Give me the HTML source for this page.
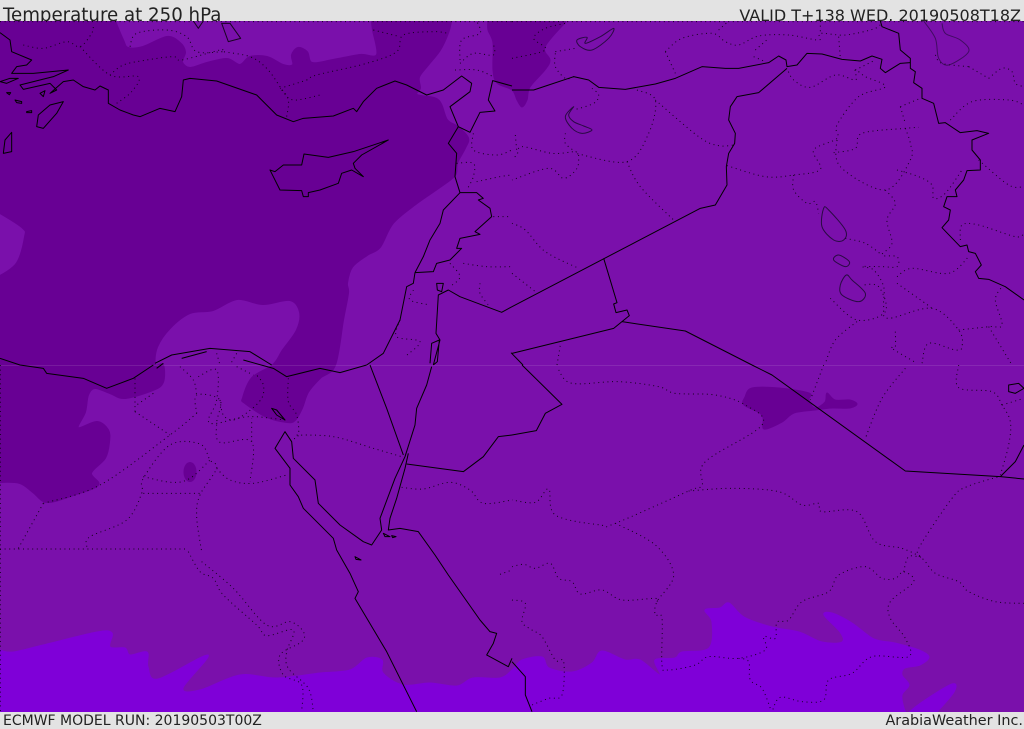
<!DOCTYPE html>
<html><head><meta charset="utf-8"><title>Temperature at 250 hPa</title>
<style>
html,body{margin:0;padding:0;background:#e3e3e3}
#w{position:relative;width:1024px;height:729px;overflow:hidden;background:#e3e3e3;font-family:"DejaVu Sans",sans-serif;color:#222}
svg{position:absolute;left:0;top:21px}
.t{position:absolute;white-space:nowrap;line-height:20px}
.hd{position:absolute;left:0;top:0;width:1024px;height:21px;overflow:hidden}
.s path{fill:none;stroke:#000;stroke-width:1;vector-effect:non-scaling-stroke;stroke-linejoin:round}
.d path{fill:none;stroke:#000;stroke-width:1;stroke-dasharray:1 3.6;vector-effect:non-scaling-stroke;opacity:.85}
.l path{fill:none;stroke:#2a0a44;stroke-width:1;vector-effect:non-scaling-stroke}
</style></head><body><div id="w">
<svg width="1024" height="691" viewBox="0 21 1024 691">
<rect x="0" y="21" width="1024" height="691" fill="#7a10ab"/>
<g stroke-linejoin="round">
<path class="sm" fill="#680094" stroke="#680094" stroke-width="2" d="M0 21L115 21L123 40L128 48L143 47L167 37L180 43L185 52L182 62L190 68L207 63L227 59L240 65L250 57L267 57L283 65L293 65L292 55L298 48L307 52L312 63L333 60L360 55L377 55L373 30L372 21L451 21L448 33L440 50L428 65L419 77L420 88L417 95L438 100L447 120L458 127L468 138L465 148L457 163L455 175L440 187L417 203L393 223L380 247L367 255L352 267L347 283L348 293L343 320L335 365L320 378L308 392L302 408L295 420L287 422L267 417L245 403L243 398L252 378L273 365L283 350L297 330L300 312L290 300L263 304L237 299L213 310L190 313L170 328L157 347L155 365L163 365L163 382L153 390L125 398L110 393L95 388L88 395L85 412L78 428L97 422L108 430L109 442L105 458L91 473L98 485L73 495L47 502L33 492L20 483L0 482L0 276L17 263L25 237L23 228L0 213Z"/>
<path class="sm" fill="#680094" stroke="#680094" d="M488 21L488 30L493 43L493 70L497 83L512 90L517 100L522 107L527 100L530 87L545 70L550 60L545 47L565 23L566 21Z"/>
<path class="sm" fill="#680094" stroke="#680094" d="M752 388L779 388L809 393L809 400L815 408L825 402L827 393L835 400L850 400L857 404L850 408L832 408L815 410L794 413L782 422L764 429L762 415L744 405L745 397Z"/>
<ellipse cx="190" cy="472" rx="6.5" ry="10" fill="#680094"/>
<path class="sm" fill="#7f00d8" stroke="#7f00d8" d="M0 650L13 652L43 645L97 632L112 633L110 647L125 648L130 655L147 652L148 667L158 679L208 655L183 688L200 690L240 675L277 678L320 673L350 670L367 658L382 660L383 673L403 685L430 683L457 686L473 678L500 678L512 670L522 660L542 657L549 668L572 672L592 663L602 651L625 660L640 660L660 675L655 660L675 658L682 652L709 648L712 622L705 610L720 608L729 603L744 617L772 627L799 632L822 642L842 642L840 632L824 615L832 613L852 623L874 639L895 643L919 650L929 657L920 665L905 668L902 675L909 685L902 695L904 708L907 714L922 702L952 684L954 692L935 714L0 714Z"/>
</g>
<rect x="0" y="365" width="1024" height="1" fill="#fff" opacity=".1"/>

<g transform="scale(.33333)">
 <g class="d">
 <path d="M70 135L130 145L200 125L240 140L275 100L280 75M240 140L330 225L415 230L395 275L350 310M330 225L370 195L440 180L520 170L545 180L660 150L670 155L750 170L800 205L840 260L865 300L860 350M390 140L410 100L500 90L560 110L590 155L670 155M840 265L920 240L950 225L1100 190L1190 155L1210 105L1300 95L1345 100M845 270L880 300L960 285M1120 90L1200 110M1380 180L1385 120L1440 100L1430 63M1380 190L1420 160L1480 165L1480 130M1365 210L1430 210L1480 230M1420 400L1420 450L1490 465L1536 450M1370 490L1420 490L1420 530L1400 570M1430 545L1500 530L1536 525M1480 650L1530 650M1390 790L1460 800L1536 800M1440 850L1440 880L1465 915M1350 790L1380 830L1350 860M1240 870L1230 900L1290 915M1200 960L1190 1010L1260 1025L1215 1070M650 1060L660 1095M710 1060L690 1095"/>
 <path d="M0 65L1536 65"/>
 </g>
 <g class="s">
 <path d="M0 98L30 120L35 155L95 180L80 195L50 200L35 220L100 220L205 210L160 230L60 255L70 268L150 250L170 270L150 280L190 245L220 240L250 260L285 270L300 258L325 270L325 310L360 330L400 345L420 350L480 325L525 335L545 290L550 240L570 235L650 243L770 285L830 345L880 365L910 355L1000 348L1060 325L1070 335L1090 305L1130 265L1185 243L1220 255L1280 285L1330 270L1385 228L1415 250L1410 275L1350 320L1375 380L1410 397L1440 337L1485 333L1465 300L1478 242L1536 258"/>
 <path d="M1375 380L1345 430L1370 460L1365 530L1380 578L1430 578L1450 595L1435 600L1470 625L1475 650L1425 695L1440 703L1380 715L1370 745L1385 745L1350 780L1310 790L1300 815L1245 818L1240 850L1220 860L1200 960L1150 1060L1100 1095M1380 578L1330 630L1320 670L1290 720L1270 770L1245 818"/>
 <path d="M1536 920L1505 937L1420 905L1380 890L1345 870L1315 885L1308 1000L1320 1020L1300 1095M1290 1090L1295 1030L1318 1020L1312 1085L1300 1095"/>
 <path d="M465 1090L515 1065L630 1045L750 1055L815 1095M545 1075L620 1055"/>
 <path d="M810 510L825 515L850 495L905 495L912 462L985 472L1060 455L1165 420L1085 465L1060 490L1065 505L1090 530L1055 510L1025 520L1015 550L960 570L925 578L925 590L910 590L905 572L840 570L820 530Z"/>
 <path d="M190 305L150 315L115 345L110 380L130 385L170 340Z"/>
 <path d="M10 460L15 420L35 397L35 455ZM0 245L30 235L55 235L20 250ZM80 335L95 332L95 338L80 338ZM45 300L65 305L65 310L50 308ZM120 280L135 272L130 290ZM20 278L32 278L28 284Z"/>
 <path d="M1310 850L1330 850L1325 875L1312 870Z"/>
 <path d="M580 63L595 85L610 63M665 70L690 70L722 115L685 125Z" opacity=".8"/>
 </g>
</g>

<g transform="translate(512,0) scale(.33333)">
 <g class="d">
 <path d="M130 160L130 200L160 235L185 230M130 155L190 145M0 175L100 150L65 115L100 85L160 70M460 155L490 220M460 155L510 115L600 100L640 125L680 135L740 108L830 105L920 120L925 100L1000 105L1090 85L1110 63M620 90L650 63M730 150L770 115M725 170L760 185M925 63L925 100M980 110L985 175M240 265L260 285L245 310L185 330M375 270L430 300L410 400L345 485L200 462L190 455L120 460L30 440L15 465L0 475M430 300L560 410L620 437L665 435M345 485L385 560L490 665M200 465L195 505L155 535L110 505L0 540M160 400L160 430L190 455M10 405L15 460M0 670L40 690L100 755L200 805M0 820L70 875"/>
 <path d="M645 497L760 530L845 525L925 508L905 450L975 415L975 375L1040 290L1120 260L1060 230L1030 210L1030 240L970 225L895 262L845 240L825 205M1030 210L1090 180M965 458L1030 445L1050 400L1180 385L1220 382M1180 385L1195 430L1195 480L1120 570L985 500L975 415M845 525L845 570L885 610L910 605L920 640M1165 320L1225 295M1165 320L1180 370M1155 510L1220 530L1260 555L1265 595L1300 580L1350 510M1120 570L1150 610L1125 660L1140 730L1110 765L1155 770L1155 800L1110 800L1050 800L1085 810L1115 860L1115 920L1130 955L1260 925L1340 990L1350 1040L1330 1050L1250 1030L1230 1090M1000 715L1060 730L1110 765M1155 830L1200 805L1310 820L1370 770M1155 850L1240 910L1260 925M955 895L1035 960L1120 935L1100 860L1050 855M1035 965L970 1020L940 1090M1340 990L1430 980L1470 975L1450 900L1470 860M1430 980L1500 1095M1150 995L1150 1040L1140 1045L1215 1090M1315 360L1380 305L1490 300L1536 315M1345 720L1350 675L1400 675L1510 710L1536 700M1400 480L1490 555L1536 560M1430 235L1470 205L1500 215L1510 250L1536 260M1370 200L1430 235M1270 165L1290 190L1370 200M135 1095L145 1035"/>
 <path d="M0 65L1536 65"/>
 </g>
 <g class="s">
 <path d="M0 270L65 270L110 255L185 230L230 240L260 262L340 268L430 252L490 235L570 200L640 205L680 205L770 188L800 168L822 180L825 200L855 195L885 160L930 162L990 178L1045 183L1080 168L1110 178L1105 205L1120 218L1165 190L1195 188"/>
 <path d="M1105 63L1110 80L1160 100L1165 150L1195 175L1195 205L1210 215L1205 248L1230 265L1230 295L1265 310L1280 370L1300 368L1345 398L1395 392L1430 400L1380 420L1380 450L1405 480L1405 510L1365 512L1355 540L1330 570L1335 590L1305 590L1295 620L1315 630L1310 660L1290 683L1345 740L1365 735L1370 755L1390 760L1408 795L1390 815L1400 835L1430 838L1480 860L1536 900"/>
 <path d="M825 205L740 278L675 290L655 320L650 360L670 400L668 430L650 460L643 500L645 555L610 615L565 625L0 920"/>
 <path d="M275 775L315 908L305 912L312 938L345 930L352 947L305 985L0 1060M330 965L520 993L720 1095"/>
 <path d="M-3 1058L33 1095"/>
 </g>
 <g class="l">
 <path d="M185 320L160 350L180 385L210 400L240 390L215 378L185 365L170 345Z"/>
 <path d="M935 625L930 680L965 720L995 720L1000 690L950 630Z"/>
 <path d="M980 765L965 780L1000 800L1012 785Z"/>
 <path d="M1003 825L985 855L990 885L1040 905L1060 880L1020 840Z"/>
 <path d="M195 120L225 112L220 130L265 110L305 85L290 115L240 150L205 140Z"/>
 <path d="M1235 63L1270 115L1280 175L1310 195L1370 155L1345 120L1300 100L1290 70" opacity=".7"/>
 </g>
</g>

<g transform="translate(0,365) scale(.33333)">
 <g class="d">
 <path d="M0 552L560 552M565 560L600 620L640 640L670 690L770 780L800 812L880 795L860 860L865 910L925 970L940 1040M605 590L700 670L800 780L870 770L910 800L905 830L840 870L850 930L905 960L905 1040M55 550L130 415M260 545L270 515L380 465L425 385L430 340L510 240L600 237L630 285L650 310L600 390L590 455L605 560M430 335L515 352L570 340L630 285M430 385L600 385M130 415L300 360L510 210L590 145M405 140L510 210M405 140L405 40M460 85L410 120M590 145L590 90L660 105L650 175L660 232L755 230L750 350M595 35L650 15L650 105L625 165L650 175L745 155L855 165M660 105L670 150L700 165L745 140L785 100L790 60L770 30M755 230L755 160M650 310L690 345L760 355L860 330M890 210L1000 215L1120 250L1205 275M1205 367L1270 372L1350 352L1410 375L1450 415L1536 405M540 5L580 45L590 90M710 5L760 30M865 40L865 110L890 150L895 210L870 225M1500 628L1536 615"/>
 <path d="M1 0L1 1040"/>
 </g>
 <g class="s">
 <path d="M0 -20L60 0L130 10L140 25L250 40L320 70L400 40L460 0M730 -15L820 10L860 35L900 25L960 10L1020 23L1100 0M490 -5L470 10M860 35L940 15"/>
 <path d="M1110 0L1160 130L1210 270"/>
 <path d="M1295 5L1280 60L1250 130L1245 180L1215 275L1185 340L1140 460L1145 495L1115 540L1090 530L1020 480L955 415L945 345L880 280L875 230L855 200L825 250L870 310L870 360L895 395L910 430L1000 520L1010 555L1050 625L1075 680L1065 700L1160 860L1250 1040"/>
 <path d="M1225 265L1215 310L1190 400L1170 460L1165 495L1200 490L1255 500L1305 570L1345 630L1440 765L1470 800L1490 805L1480 835L1460 870L1525 905L1536 880"/>
 <path d="M1536 210L1495 215L1450 275L1390 320L1220 297"/>
 <path d="M815 130L830 135L855 165L830 150ZM1150 505L1170 515L1155 515ZM1175 512L1188 515L1178 518ZM1065 575L1083 585L1068 583Z"/>
 </g>
</g>

<g transform="translate(512,365) scale(.33333)">
 <g class="d">
 <path d="M140 15L180 55L320 50L440 65L490 85L610 90L700 120L750 180L580 290L570 360L530 378L310 475L265 480L130 450L110 372L70 412L0 405M530 378L660 370L800 380L870 420L920 415L930 440L1035 440L1090 530L1170 550L1230 580L1270 625L1340 650L1370 680L1450 710L1536 715M310 475L430 540L485 630L435 710L430 750L450 760L450 900L470 915L550 900L590 875L680 880L760 855L755 815L790 820L795 772L830 765L870 710L950 680L980 630L1060 605L1110 640L1150 640L1175 620L1205 650L1135 710L1135 760L1180 820L1190 875L1080 875L1020 925L950 945L935 1005L870 1010L805 997L780 1040M680 880L710 890L715 945L750 970L775 1030M1175 620L1190 575L1230 575L1220 550L1320 400L1365 365L1460 335M0 705L40 715L30 770L60 795L90 815L130 885L155 890L150 990L110 1000L60 1020M0 605L35 598L70 610L115 595L140 640L180 650L205 687L270 675L330 705L430 700L435 710M935 0L895 105M1180 10L1110 100L1060 220M1340 0L1340 68L1440 80L1470 120L1495 170L1490 240L1465 330M1470 120L1536 100"/>
 </g>
 <g class="s">
 <path d="M30 0L150 118L100 145L73 197L0 210"/>
 <path d="M720 0L780 30L1180 318L1465 335L1536 342M1465 335L1510 290L1536 240"/>
 <path d="M0 890L40 935L40 990L60 1040"/>
 <path d="M1490 60L1520 55L1536 70L1510 85L1490 80Z"/>
 </g>
</g>
</svg>
<div class="hd">
 <div class="t" style="left:3px;top:6px;font-size:18.2px">Temperature at 250 hPa</div>
 <div class="t" style="right:3px;top:6px;font-size:16px">VALID T+138 WED. 20190508T18Z</div>
</div>
<div class="t" style="left:3px;top:711px;font-size:14px">ECMWF MODEL RUN: 20190503T00Z</div>
<div class="t" style="right:1px;top:711px;font-size:14.4px">ArabiaWeather Inc.</div>
</div>
<script>
(function(){
 function smooth(d,edge){
  return d.split('M').filter(Boolean).map(function(sub){
   var closed=/Z\s*$/.test(sub);
   var p=sub.replace(/Z/g,'').split('L').map(function(s){return s.trim().split(/\s+/).map(Number)});
   var n=p.length,out='M'+p[0][0]+' '+p[0][1];
   if(n<3) return out+'L'+p[n-1][0]+' '+p[n-1][1];
   var g=function(i){return closed?p[(i+n)%n]:p[Math.max(0,Math.min(n-1,i))]};
   var isE=function(q){return edge&&(q[0]<=0||q[1]<=23||q[1]>=712)};
   var m=closed?n:n-1;
   for(var i=0;i<m;i++){
    var a=g(i-1),b=g(i),c=g(i+1),e=g(i+2);
    var k1=isE(b)?0:1/6,k2=isE(c)?0:1/6;
    out+='C'+(b[0]+(c[0]-a[0])*k1)+' '+(b[1]+(c[1]-a[1])*k1)+' '+(c[0]-(e[0]-b[0])*k2)+' '+(c[1]-(e[1]-b[1])*k2)+' '+c[0]+' '+c[1];
   }
   return out+(closed?'Z':'');
  }).join('');
 }
 document.querySelectorAll('path.sm').forEach(function(x){x.setAttribute('d',smooth(x.getAttribute('d'),true))});
 document.querySelectorAll('.d path,.l path').forEach(function(x){x.setAttribute('d',smooth(x.getAttribute('d'),false))});
})();
</script>
</body></html>
